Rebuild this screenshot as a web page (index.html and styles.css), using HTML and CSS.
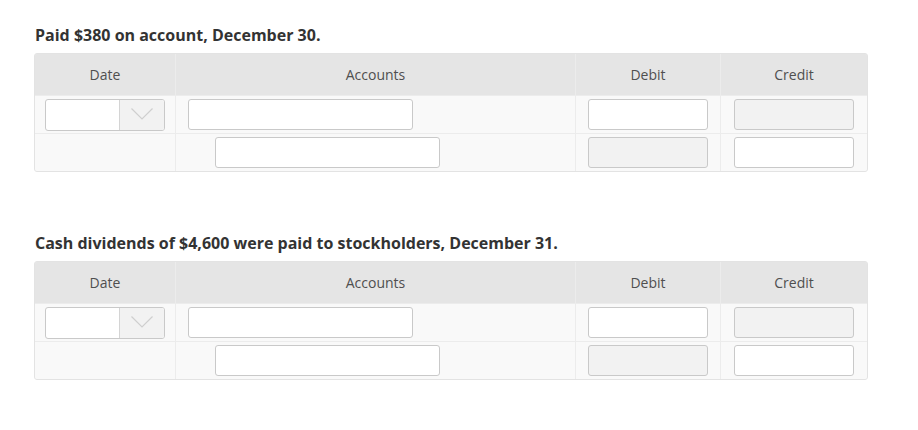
FILE: index.html
```html
<!DOCTYPE html>
<html>
<head>
<meta charset="utf-8">
<link rel="stylesheet" href="styles.css">
</head>
<body>
<div class="page">
  <section class="entry">
    <h2 class="title">Paid $380 on account, December 30.</h2>
    <div class="journal">
      <div class="hd">Date</div>
      <div class="hd">Accounts</div>
      <div class="hd">Debit</div>
      <div class="hd">Credit</div>

      <div class="cell center">
        <div class="select"><span class="sel-val"></span><span class="sel-btn"><svg width="22" height="12" viewBox="0 0 22 12"><path d="M0.5 0.5 L11 11 L21.5 0.5" fill="none" stroke="#cfcfcf" stroke-width="1.2"/></svg></span></div>
      </div>
      <div class="cell"><div class="inp acct"></div></div>
      <div class="cell center"><div class="inp num"></div></div>
      <div class="cell center"><div class="inp num dis"></div></div>

      <div class="cell"></div>
      <div class="cell indent"><div class="inp acct"></div></div>
      <div class="cell center"><div class="inp num dis"></div></div>
      <div class="cell center"><div class="inp num"></div></div>
    </div>
  </section>

  <section class="entry second">
    <h2 class="title">Cash dividends of $4,600 were paid to stockholders, December 31.</h2>
    <div class="journal">
      <div class="hd">Date</div>
      <div class="hd">Accounts</div>
      <div class="hd">Debit</div>
      <div class="hd">Credit</div>

      <div class="cell center">
        <div class="select"><span class="sel-val"></span><span class="sel-btn"><svg width="22" height="12" viewBox="0 0 22 12"><path d="M0.5 0.5 L11 11 L21.5 0.5" fill="none" stroke="#cfcfcf" stroke-width="1.2"/></svg></span></div>
      </div>
      <div class="cell"><div class="inp acct"></div></div>
      <div class="cell center"><div class="inp num"></div></div>
      <div class="cell center"><div class="inp num dis"></div></div>

      <div class="cell"></div>
      <div class="cell indent"><div class="inp acct"></div></div>
      <div class="cell center"><div class="inp num dis"></div></div>
      <div class="cell center"><div class="inp num"></div></div>
    </div>
  </section>
</div>
</body>
</html>
```
FILE: styles.css
```css
html, body {
  margin: 0;
  padding: 0;
  background: #ffffff;
}
body {
  font-family: "Open Sans", "Liberation Sans", sans-serif;
  color: #333333;
}
.page {
  padding: 24px 0 0 34px;
}
.title {
  margin: 0 0 7px 1px;
  font-size: 16px;
  line-height: 22px;
  font-weight: 700;
  color: #333333;
}
.entry.second {
  margin-top: 60px;
}
.journal {
  display: grid;
  grid-template-columns: 140px 399px 144px 146px;
  grid-template-rows: 41px 37px 37px;
  gap: 1px;
  width: 834px;
  box-sizing: border-box;
  border: 1px solid #e3e3e3;
  border-radius: 3px;
  background: #ececec;
  overflow: hidden;
}
.hd {
  background: #e5e5e5;
  display: flex;
  align-items: center;
  justify-content: center;
  font-size: 14px;
  color: #4f4f4f;
}
.cell {
  background: #f9f9f9;
  display: flex;
  align-items: center;
  padding-left: 12px;
}
.cell.center {
  justify-content: center;
  padding-left: 0;
}
.cell.indent {
  padding-left: 39px;
}
.inp {
  box-sizing: border-box;
  height: 31px;
  border: 1px solid #c9c9c9;
  border-radius: 3px;
  background: #ffffff;
}
.inp.acct {
  width: 225px;
}
.inp.num {
  width: 120px;
}
.inp.dis {
  background: #f2f2f2;
}
.select {
  box-sizing: border-box;
  width: 120px;
  height: 32px;
  border: 1px solid #c9c9c9;
  border-radius: 3px;
  display: flex;
  overflow: hidden;
  background: #ffffff;
}
.sel-val {
  width: 73px;
  border-right: 1px solid #d4d4d4;
}
.sel-btn {
  flex: 1;
  background: #f2f2f2;
  display: flex;
  align-items: center;
  justify-content: center;
  padding-bottom: 1px;
}
.sel-btn svg {
  display: block;
}
```
